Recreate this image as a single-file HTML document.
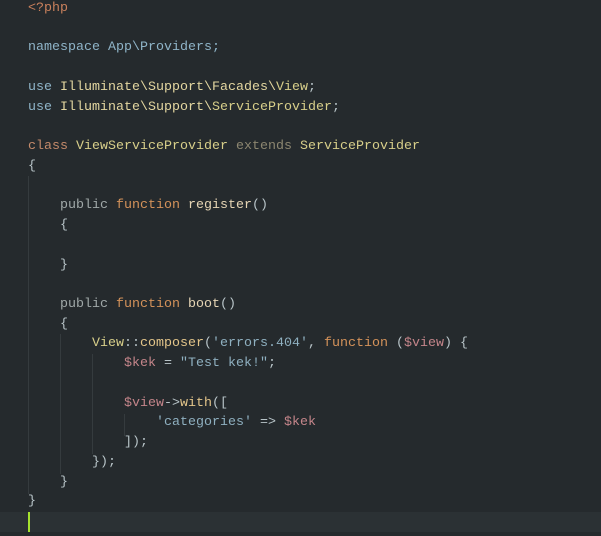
<!DOCTYPE html>
<html><head><style>
html,body{margin:0;padding:0;background:#252a2d;width:601px;height:536px;overflow:hidden}
.ed{position:relative;width:601px;height:536px;background:#252a2d}
.cur{position:absolute;left:0;top:512px;width:601px;height:20px;background:#2b3134}
.caret{position:absolute;left:28px;top:512px;width:2px;height:20px;background:#a6e22e}
.g{position:absolute;width:1px;background:#353b3e}
pre{position:absolute;left:28px;top:-1px;margin:0;font-family:"Liberation Mono",monospace;font-size:13.33px;line-height:19.73px;color:#b8c4c8;white-space:pre}
.k{color:#c9805c}.t{color:#c48a6a}.n{color:#8fb4c8}.y{color:#e3d6a0}.c{color:#d8cf8a}.e{color:#8c8670}
.p{color:#a0a8a8}.f{color:#d4925a}.m{color:#e6d5b5}.s{color:#8fb0c0}.v{color:#c4858a}.w{color:#e3c58a}
</style></head><body><div class="ed">
<div class="cur"></div>
<div class="g" style="left:28px;top:176px;height:318px"></div>
<div class="g" style="left:60px;top:334px;height:140px"></div>
<div class="g" style="left:92px;top:354px;height:100px"></div>
<div class="g" style="left:124px;top:414px;height:22px"></div>
<div class="caret"></div>
<pre><span class="k">&lt;?php</span>

<span class="n">namespace App\Providers;</span>

<span class="n">use</span> <span class="y">Illuminate\Support\Facades\</span><span class="c">View</span>;
<span class="n">use</span> <span class="y">Illuminate\Support\</span><span class="c">ServiceProvider</span>;

<span class="t">class</span> <span class="c">ViewServiceProvider</span> <span class="e">extends</span> <span class="c">ServiceProvider</span>
{

    <span class="p">public</span> <span class="f">function</span> <span class="m">register</span>()
    {

    }

    <span class="p">public</span> <span class="f">function</span> <span class="m">boot</span>()
    {
        <span class="c">View</span>::<span class="w">composer</span>(<span class="s">'errors.404'</span>, <span class="f">function</span> (<span class="v">$view</span>) {
            <span class="v">$kek</span> = <span class="s">"Test kek!"</span>;

            <span class="v">$view</span>-&gt;<span class="w">with</span>([
                <span class="s">'categories'</span> =&gt; <span class="v">$kek</span>
            ]);
        });
    }
}
</pre>
</div></body></html>
